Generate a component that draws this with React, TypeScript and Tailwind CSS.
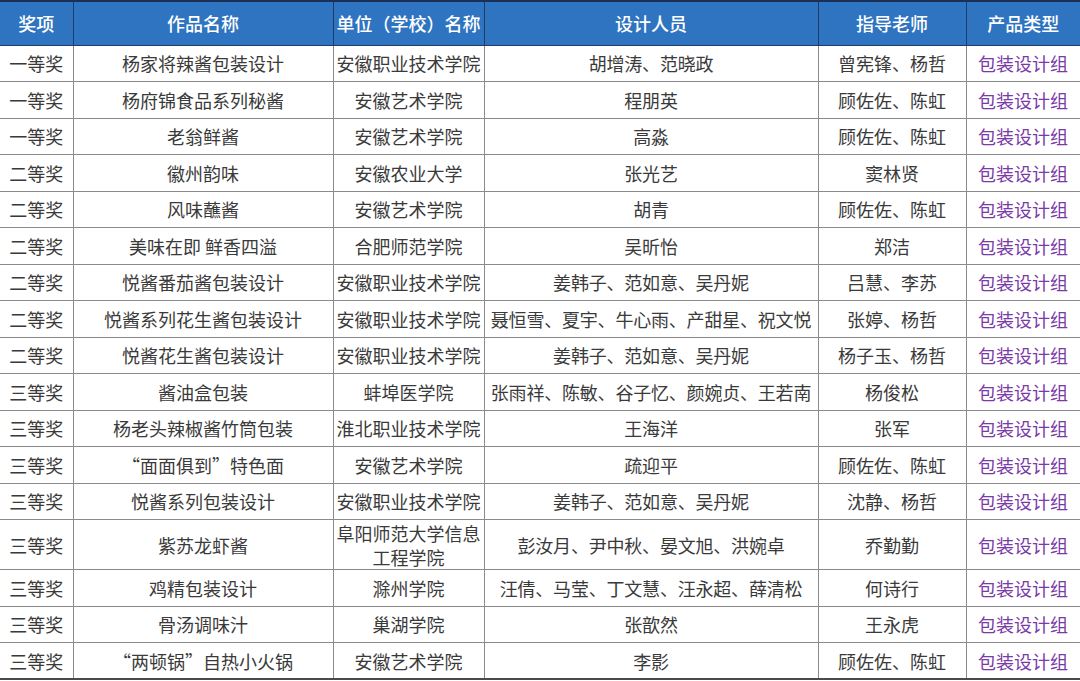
import React from "react";

type Row = [string, string, string, string, string];

const rows: Row[] = [
  ["一等奖", "杨家将辣酱包装设计", "安徽职业技术学院", "胡增涛、范晓政", "曾宪锋、杨哲"],
  ["一等奖", "杨府锦食品系列秘酱", "安徽艺术学院", "程朋英", "顾佐佐、陈虹"],
  ["一等奖", "老翁鲜酱", "安徽艺术学院", "高淼", "顾佐佐、陈虹"],
  ["二等奖", "徽州韵味", "安徽农业大学", "张光艺", "窦林贤"],
  ["二等奖", "风味蘸酱", "安徽艺术学院", "胡青", "顾佐佐、陈虹"],
  ["二等奖", "美味在即 鲜香四溢", "合肥师范学院", "吴昕怡", "郑洁"],
  ["二等奖", "悦酱番茄酱包装设计", "安徽职业技术学院", "姜韩子、范如意、吴丹妮", "吕慧、李苏"],
  ["二等奖", "悦酱系列花生酱包装设计", "安徽职业技术学院", "聂恒雪、夏宇、牛心雨、产甜星、祝文悦", "张婷、杨哲"],
  ["二等奖", "悦酱花生酱包装设计", "安徽职业技术学院", "姜韩子、范如意、吴丹妮", "杨子玉、杨哲"],
  ["三等奖", "酱油盒包装", "蚌埠医学院", "张雨祥、陈敏、谷子忆、颜婉贞、王若南", "杨俊松"],
  ["三等奖", "杨老头辣椒酱竹筒包装", "淮北职业技术学院", "王海洋", "张军"],
  ["三等奖", "“面面俱到”特色面", "安徽艺术学院", "疏迎平", "顾佐佐、陈虹"],
  ["三等奖", "悦酱系列包装设计", "安徽职业技术学院", "姜韩子、范如意、吴丹妮", "沈静、杨哲"],
  ["三等奖", "紫苏龙虾酱", "阜阳师范大学信息工程学院", "彭汝月、尹中秋、晏文旭、洪婉卓", "乔勤勤"],
  ["三等奖", "鸡精包装设计", "滁州学院", "汪倩、马莹、丁文慧、汪永超、薛清松", "何诗行"],
  ["三等奖", "骨汤调味汁", "巢湖学院", "张歆然", "王永虎"],
  ["三等奖", "“两顿锅”自热小火锅", "安徽艺术学院", "李影", "顾佐佐、陈虹"],
];

const headers = ["奖项", "作品名称", "单位（学校）名称", "设计人员", "指导老师", "产品类型"];

export default function App() {
  return (
    <div
      className="w-[1080px] h-[681px] overflow-hidden bg-white"
      style={{ fontFamily: '"Noto Sans CJK SC", "Noto Sans", sans-serif' }}
    >
      <table className="w-[1080px] border-collapse table-fixed text-[18px] leading-[22px]">
        <colgroup>
          <col className="w-[73px]" />
          <col className="w-[260px]" />
          <col className="w-[151px]" />
          <col className="w-[334px]" />
          <col className="w-[148px]" />
          <col className="w-[114px]" />
        </colgroup>
        <thead>
          <tr className="h-[44px] bg-[#2e74c0] border-t-2 border-t-[#1a2f55]">
            {headers.map((h, i) => (
              <th
                key={h}
                className={`p-0 text-center font-medium text-white whitespace-nowrap border-b border-b-[#1f3b66] ${
                  i < headers.length - 1 ? "border-r border-r-[#1f3b66]" : ""
                }`}
              >
                {h}
              </th>
            ))}
          </tr>
        </thead>
        <tbody>
          {rows.map((r, idx) => {
            const tall = idx === 13;
            const last = idx === rows.length - 1;
            return (
              <tr key={idx} className={tall ? "h-[50px]" : "h-[36.5px]"}>
                {r.map((c, i) => (
                  <td
                    key={i}
                    className={`p-0 text-center text-[#3a3a3a] border border-[#8a8a8a] ${
                      i === 0 ? "border-l-0" : ""
                    } ${last ? "border-b-2 border-b-[#4a4a4a]" : ""} ${
                      i === 2 && tall ? "whitespace-normal px-0.5 leading-[24px]" : "whitespace-nowrap"
                    } ${i === 3 ? "tracking-[-0.2px]" : ""}`}
                  >
                    {c}
                  </td>
                ))}
                <td
                  className={`p-0 text-center text-[#7a3aa8] border border-[#8a8a8a] border-r-[#6a6a6a] whitespace-nowrap ${
                    last ? "border-b-2 border-b-[#4a4a4a]" : ""
                  }`}
                >
                  包装设计组
                </td>
              </tr>
            );
          })}
        </tbody>
      </table>
    </div>
  );
}
